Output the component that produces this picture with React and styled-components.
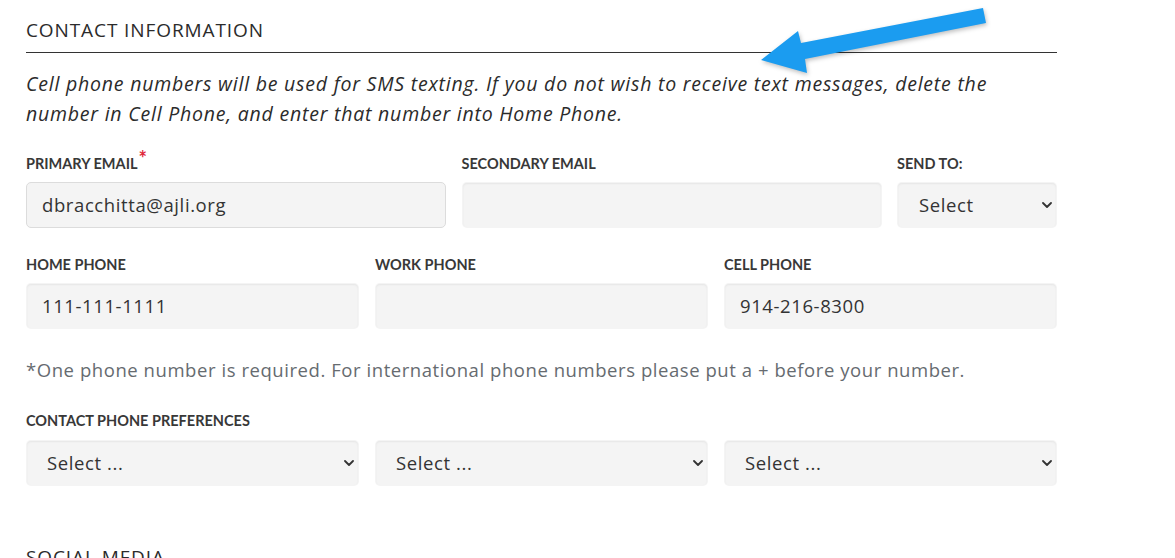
import React from "react";
import styled, { createGlobalStyle } from "styled-components";

const BODY = `"Open Sans", Lato, sans-serif`;
const LABEL = `Lato, "Open Sans", sans-serif`;

const Global = createGlobalStyle`
  html, body { margin: 0; padding: 0; background: #fff; }
  body { font-family: ${BODY}; color: #333; }
  * { box-sizing: border-box; }
`;

const Page = styled.div`
  position: relative;
  width: 1175px;
  height: 558px;
  overflow: hidden;
  padding: 18px 0 0 26px;
`;

const Form = styled.div`
  width: 1031px;
`;

const SectionTitle = styled.h2`
  margin: 0;
  font-family: ${BODY};
  font-size: 19px;
  line-height: 24px;
  font-weight: 400;
  letter-spacing: 0.9px;
  text-transform: uppercase;
  color: #2b2b2b;
  padding-bottom: ${(p) => (p.$ruled ? "10px" : "0")};
  border-bottom: ${(p) => (p.$ruled ? "1px solid #333" : "none")};
  margin-top: ${(p) => p.$mt || 0}px;
`;

const Intro = styled.p`
  margin: 16px 0 0;
  font-size: 19.5px;
  line-height: 30px;
  letter-spacing: 0.78px;
  font-style: italic;
  color: #2b2b2b;
  white-space: nowrap;
`;

const Row = styled.div`
  display: grid;
  grid-template-columns: ${(p) => p.$cols};
  column-gap: ${(p) => p.$gap || 16}px;
  margin-top: ${(p) => p.$mt}px;
`;

const Field = styled.div`
  display: flex;
  flex-direction: column;
  margin-top: ${(p) => p.$mt || 0}px;
`;

const Label = styled.label`
  display: block;
  font-family: ${LABEL};
  font-size: 14.5px;
  line-height: 18px;
  font-weight: 700;
  text-transform: uppercase;
  color: #383838;
  margin-bottom: ${(p) => p.$mb || 9}px;
  white-space: nowrap;
`;

const Req = styled.span`
  color: #e0283a;
  font-size: 20px;
  font-weight: 700;
  position: relative;
  top: -3px;
  margin-left: 1px;
  line-height: 0;
`;

const Input = styled.input`
  height: 46px;
  width: 100%;
  border-radius: 5px;
  border: 1px solid ${(p) => (p.$outlined ? "#dcdcdc" : "transparent")};
  background: #f4f4f4;
  box-shadow: ${(p) => (p.$outlined ? "none" : "inset 0 1px 2px rgba(0,0,0,0.06)")};
  padding: 0 15px 2px;
  font-family: ${BODY};
  font-size: 18.5px;
  letter-spacing: 0.6px;
  color: #333;
  outline: none;
`;

const SelectWrap = styled.div`
  position: relative;
`;

const Select = styled.select`
  appearance: none;
  -webkit-appearance: none;
  height: 46px;
  width: 100%;
  border-radius: 5px;
  border: 1px solid transparent;
  background: #f4f4f4;
  box-shadow: inset 0 1px 2px rgba(0,0,0,0.06);
  padding: 0 30px 2px ${(p) => p.$pl || 20}px;
  font-family: ${BODY};
  font-size: 18.5px;
  letter-spacing: 0.6px;
  color: #333;
  outline: none;
`;

const Chevron = styled.svg`
  position: absolute;
  right: 5px;
  top: 50%;
  margin-top: -3px;
  width: 10px;
  height: 6px;
  pointer-events: none;
`;

const Note = styled.p`
  margin: 26px 0 0;
  font-size: 18.5px;
  line-height: 30px;
  letter-spacing: 0.56px;
  color: #666b70;
`;

const Arrow = styled.svg`
  position: absolute;
  left: 0;
  top: 0;
  width: 1175px;
  height: 120px;
  pointer-events: none;
  filter: drop-shadow(1px 2px 2px rgba(0,0,0,0.25));
`;

const SelectBox = ({ label, pl }) => (
  <SelectWrap>
    <Select $pl={pl} defaultValue="">
      <option value="">{label}</option>
    </Select>
    <Chevron viewBox="0 0 10 6">
      <path d="M1 1 L5 5 L9 1" fill="none" stroke="#333" strokeWidth="1.8" strokeLinecap="round" strokeLinejoin="round" />
    </Chevron>
  </SelectWrap>
);

export default function App() {
  return (
    <Page>
      <Global />
      <Form>
        <SectionTitle $ruled>Contact Information</SectionTitle>
        <Intro>
          Cell phone numbers will be used for SMS texting. If you do not wish to receive text messages, delete the
          <br />
          number in Cell Phone, and enter that number into Home Phone.
        </Intro>

        <Row $cols="420px 420px 160px" $gap={15.5} $mt={26}>
          <Field>
            <Label>Primary Email<Req>*</Req></Label>
            <Input $outlined defaultValue="dbracchitta@ajli.org" />
          </Field>
          <Field>
            <Label>Secondary Email</Label>
            <Input />
          </Field>
          <Field>
            <Label>Send To:</Label>
            <SelectBox label="Select" pl={21} />
          </Field>
        </Row>

        <Row $cols="repeat(3, 1fr)" $mt={28}>
          <Field>
            <Label>Home Phone</Label>
            <Input defaultValue="111-111-1111" />
          </Field>
          <Field>
            <Label>Work Phone</Label>
            <Input />
          </Field>
          <Field>
            <Label>Cell Phone</Label>
            <Input defaultValue="914-216-8300" />
          </Field>
        </Row>

        <Note>*One phone number is required. For international phone numbers please put a + before your number.</Note>

        <Field $mt={27}>
          <Label $mb={10}>Contact Phone Preferences</Label>
          <Row $cols="repeat(3, 1fr)" $mt={0}>
            <SelectBox label="Select ..." />
            <SelectBox label="Select ..." />
            <SelectBox label="Select ..." />
          </Row>
        </Field>

        <SectionTitle $mt={59}>Social Media</SectionTitle>
      </Form>

      <Arrow viewBox="0 0 1175 120">
        <polygon
          points="983,8 986,23 805,59 807,73 761,60 798,31 801,43"
          fill="#1b9cf0"
        />
      </Arrow>
    </Page>
  );
}
